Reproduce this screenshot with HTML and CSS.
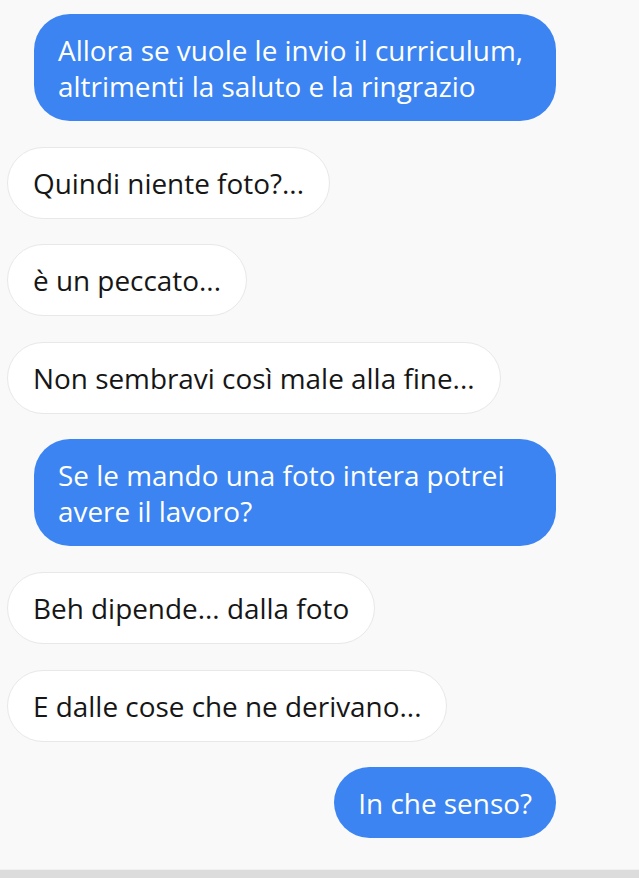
FILE: index.html
```html
<!DOCTYPE html>
<html lang="it">
<head>
<meta charset="utf-8">
<link rel="stylesheet" href="styles.css">
</head>
<body>
<div class="chat">
  <div class="msg sent">Allora se vuole le invio il curriculum, altrimenti la saluto e la ringrazio</div>
  <div class="msg recv">Quindi niente foto?...</div>
  <div class="msg recv">è un peccato...</div>
  <div class="msg recv">Non sembravi così male alla fine...</div>
  <div class="msg sent">Se le mando una foto intera potrei avere il lavoro?</div>
  <div class="msg recv">Beh dipende... dalla foto</div>
  <div class="msg recv">E dalle cose che ne derivano...</div>
  <div class="msg sent">In che senso?</div>
</div>
<div class="footer"></div>
</body>
</html>
```
FILE: styles.css
```css
html, body {
  margin: 0;
  padding: 0;
  background: #f9f9f9;
}
body {
  width: 639px;
  height: 878px;
  display: flex;
  flex-direction: column;
  overflow: hidden;
  font-family: "Open Sans", "Noto Sans", sans-serif;
}
.chat {
  flex: 1;
  display: flex;
  flex-direction: column;
  gap: 25.6px;
  padding: 14px 83px 0 7px;
}
.msg {
  font-size: 27.9px;
  line-height: 36px;
  border-radius: 36px;
  box-sizing: border-box;
}
.recv {
  align-self: flex-start;
  background: #ffffff;
  color: #161616;
  border: 1px solid #e8e8e8;
  padding: 17px 25px;
}
.sent {
  align-self: flex-end;
  background: #3b84f1;
  color: #ffffff;
  padding: 17.5px 24px;
  max-width: 522px;
}
.footer {
  height: 8px;
  background: #dcdcdc;
  border-top: 1px solid #f1f1f1;
}
```
